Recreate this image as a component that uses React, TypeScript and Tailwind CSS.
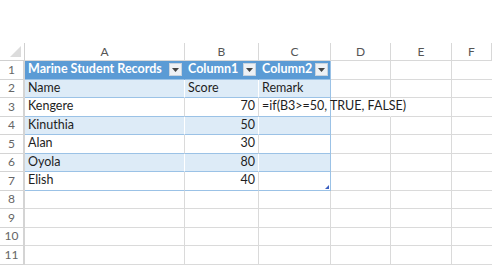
import React from "react";

const cols = [
  { key: "A", w: 160 },
  { key: "B", w: 74 },
  { key: "C", w: 72 },
  { key: "D", w: 60 },
  { key: "E", w: 61 },
  { key: "F", w: 40 },
];

const colW = ["w-[160px]", "w-[74px]", "w-[72px]", "w-[60px]", "w-[61px]", "w-[40px]"];

type Row = { a?: string; b?: string; c?: string };

const data: Row[] = [
  { a: "Marine Student Records", b: "Column1", c: "Column2" },
  { a: "Name", b: "Score", c: "Remark" },
  { a: "Kengere", b: "70", c: "=if(B3>=50, TRUE, FALSE)" },
  { a: "Kinuthia", b: "50" },
  { a: "Alan", b: "30" },
  { a: "Oyola", b: "80" },
  { a: "Elish", b: "40" },
  {},
  {},
  {},
  {},
];

function Dropdown() {
  return (
    <div className="absolute right-[2px] top-[2px] w-[13px] h-[13px] bg-[#eef1f5] border border-[#c9d3de] flex items-center justify-center">
      <svg width="7" height="4" viewBox="0 0 7 4">
        <path d="M0 0 L7 0 L3.5 4 Z" fill="#444" />
      </svg>
    </div>
  );
}

export default function App() {
  return (
    <div
      className="w-[500px] h-[269px] bg-white overflow-hidden pt-[43px]"
      style={{ fontFamily: "Lato, 'Open Sans', sans-serif" }}
    >
      {/* column headers */}
      <div className="flex h-[18px]">
        <div className="w-[25px] h-full border-r border-b border-[#d0d0d0] relative shrink-0">
          <svg className="absolute right-[3px] bottom-[3px]" width="11" height="11" viewBox="0 0 11 11">
            <path d="M11 0 L11 11 L0 11 Z" fill="#dcdcdc" />
          </svg>
        </div>
        {cols.map((c, i) => (
          <div
            key={c.key}
            className={`${colW[i]} shrink-0 h-full border-r border-b border-[#d8d8d8] flex items-center justify-center text-[12px] text-[#555]`}
          >
            {c.key}
          </div>
        ))}
      </div>
      {data.map((r, ri) => {
        const n = ri + 1;
        const isHeader = n === 1;
        const inTable = n <= 7;
        const band = n === 2 || n === 4 || n === 6;
        const tableBg = isHeader ? "bg-[#5b9bd5]" : band ? "bg-[#ddebf7]" : "bg-white";
        const tableBorder = inTable ? "border-[#9bc2e6]" : "border-[#dadada]";
        const txt = isHeader ? "text-white font-bold" : "text-[#1e1e1e]";
        return (
          <div key={n} className="flex h-[18.5px]">
            <div className="w-[25px] shrink-0 h-full border-r-2 border-b border-[#d4d4d4] flex items-center justify-center text-[12px] text-[#666]">
              {n}
            </div>
            {/* A */}
            <div
              className={`w-[160px] shrink-0 h-full relative border-b ${tableBorder} border-r ${inTable ? (isHeader ? "border-r-[#5b9bd5]" : band ? "border-r-white" : "border-r-[#dadada]") : "border-r-[#dadada]"} ${inTable ? tableBg : ""} flex items-center pl-[3px] text-[12.5px] ${txt} whitespace-nowrap`}
            >
              {r.a}
              {isHeader && <Dropdown />}
            </div>
            {/* B */}
            <div
              className={`w-[74px] shrink-0 h-full relative border-b ${tableBorder} border-r ${inTable ? (isHeader ? "border-r-[#5b9bd5]" : band ? "border-r-white" : "border-r-[#dadada]") : "border-r-[#dadada]"} ${inTable ? tableBg : ""} flex items-center ${n >= 3 ? "justify-end pr-[3px]" : "pl-[3px]"} text-[12.5px] ${txt} whitespace-nowrap`}
            >
              {r.b}
              {isHeader && <Dropdown />}
            </div>
            {/* C */}
            <div
              className={`w-[72px] shrink-0 h-full relative border-b ${tableBorder} border-r ${inTable ? "border-r-[#9bc2e6]" : "border-r-[#dadada]"} ${inTable ? tableBg : ""} flex items-center pl-[3px] text-[12.5px] ${txt} whitespace-nowrap ${n === 3 ? "overflow-visible z-10" : ""}`}
            >
              {r.c}
              {isHeader && <Dropdown />}
              {n === 7 && (
                <svg className="absolute right-[1px] bottom-[1px]" width="4" height="4" viewBox="0 0 4 4">
                  <path d="M4 0 L4 4 L0 4 Z" fill="#3b5fc0" />
                </svg>
              )}
            </div>
            {/* D E F */}
            <div className={`w-[60px] shrink-0 h-full border-b border-r border-[#dadada] ${n === 3 ? "border-r-transparent" : ""}`} />
            <div className="w-[61px] shrink-0 h-full border-b border-r border-[#dadada]" />
            <div className="w-[40px] shrink-0 h-full border-b border-[#dadada]" />
          </div>
        );
      })}
    </div>
  );
}
